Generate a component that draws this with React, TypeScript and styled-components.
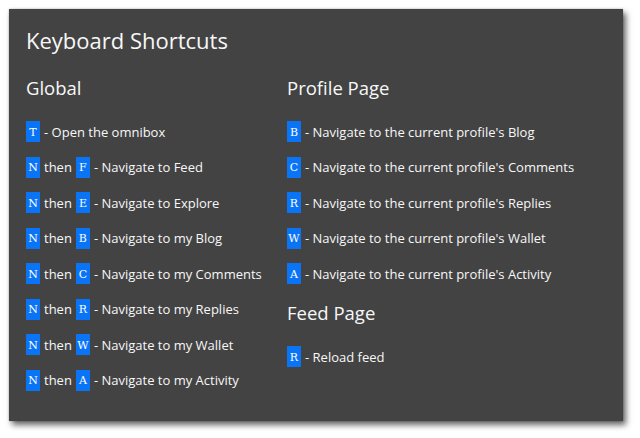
import React from "react";
import styled, { createGlobalStyle } from "styled-components";

const Global = createGlobalStyle`
  html, body { margin: 0; padding: 0; background: #ffffff; }
  body { width: 640px; height: 438px; overflow: hidden; }
`;

const Page = styled.div`
  padding: 9px 17px 17px 9px;
`;

const Panel = styled.div`
  width: 614px;
  height: 412px;
  box-sizing: border-box;
  background: #434343;
  color: #f7f7f7;
  font-family: "Open Sans", "Noto Sans", sans-serif;
  padding: 17px 17px 0 17px;
  box-shadow: 3px 4px 6px rgba(0, 0, 0, 0.6), 0 0 2px rgba(0, 0, 0, 0.25);
`;

const Title = styled.h1`
  margin: 0 0 22px 0;
  font-size: 22px;
  font-weight: 400;
  line-height: 28px;
`;

const Columns = styled.div`
  display: grid;
  grid-template-columns: 261px 1fr;
`;

const Column = styled.div`
  display: flex;
  flex-direction: column;
`;

const Heading = styled.h2<{ $top?: number }>`
  margin: ${(p) => p.$top ?? 0}px 0 21px 0;
  font-size: 18.5px;
  font-weight: 400;
  line-height: 24px;
`;

const List = styled.div`
  display: flex;
  flex-direction: column;
  gap: 14.5px;
`;

const Row = styled.div`
  display: flex;
  align-items: center;
  height: 21px;
  font-size: 13px;
  white-space: nowrap;
`;

const Key = styled.kbd`
  display: inline-flex;
  align-items: center;
  justify-content: center;
  box-sizing: border-box;
  width: 14px;
  height: 21px;
  padding-top: 1px;
  background: #0a74f7;
  color: #ffffff;
  font-family: "DejaVu Serif", "Liberation Serif", serif;
  font-size: 11px;
  font-weight: 400;
`;

const Then = styled.span`
  margin: 0 4px;
`;

const Desc = styled.span`
  margin-left: 4px;
`;

type Shortcut = { keys: string[]; label: string };

const global: Shortcut[] = [
  { keys: ["T"], label: "Open the omnibox" },
  { keys: ["N", "F"], label: "Navigate to Feed" },
  { keys: ["N", "E"], label: "Navigate to Explore" },
  { keys: ["N", "B"], label: "Navigate to my Blog" },
  { keys: ["N", "C"], label: "Navigate to my Comments" },
  { keys: ["N", "R"], label: "Navigate to my Replies" },
  { keys: ["N", "W"], label: "Navigate to my Wallet" },
  { keys: ["N", "A"], label: "Navigate to my Activity" },
];

const profile: Shortcut[] = [
  { keys: ["B"], label: "Navigate to the current profile's Blog" },
  { keys: ["C"], label: "Navigate to the current profile's Comments" },
  { keys: ["R"], label: "Navigate to the current profile's Replies" },
  { keys: ["W"], label: "Navigate to the current profile's Wallet" },
  { keys: ["A"], label: "Navigate to the current profile's Activity" },
];

const feed: Shortcut[] = [{ keys: ["R"], label: "Reload feed" }];

function ShortcutRow({ s }: { s: Shortcut }) {
  return (
    <Row>
      {s.keys.map((k, i) => (
        <React.Fragment key={i}>
          {i > 0 && <Then>then</Then>}
          <Key>{k}</Key>
        </React.Fragment>
      ))}
      <Desc>- {s.label}</Desc>
    </Row>
  );
}

export default function App() {
  return (
    <Page>
      <Global />
      <Panel>
        <Title>Keyboard Shortcuts</Title>
        <Columns>
          <Column>
            <Heading>Global</Heading>
            <List>
              {global.map((s, i) => (
                <ShortcutRow key={i} s={s} />
              ))}
            </List>
          </Column>
          <Column>
            <Heading>Profile Page</Heading>
            <List>
              {profile.map((s, i) => (
                <ShortcutRow key={i} s={s} />
              ))}
            </List>
            <Heading $top={17}>Feed Page</Heading>
            <List>
              {feed.map((s, i) => (
                <ShortcutRow key={i} s={s} />
              ))}
            </List>
          </Column>
        </Columns>
      </Panel>
    </Page>
  );
}
